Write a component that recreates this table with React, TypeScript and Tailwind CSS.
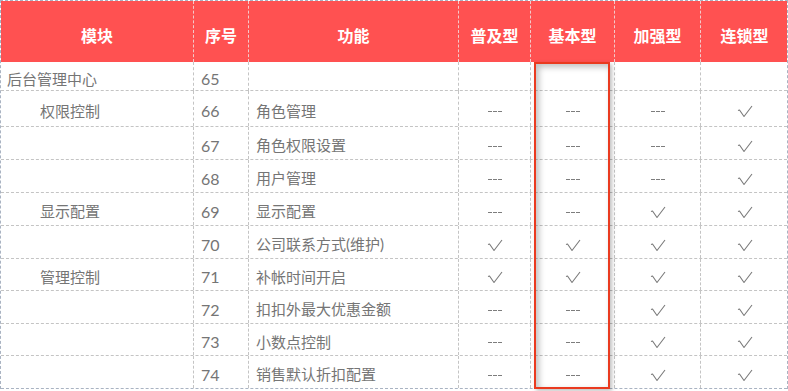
import React from 'react';

type Mark = 'y' | 'n' | '';

const cols = 'grid grid-cols-[193px_55px_210px_72px_84px_86px_87px]';

const rows: { mod: string; sub?: boolean; no: string; fn: string; h: string; marks: Mark[] }[] = [
  { mod: '后台管理中心', no: '65', fn: '', h: 'h-[29px]', marks: ['', '', '', ''] },
  { mod: '权限控制', sub: true, no: '66', fn: '角色管理', h: 'h-[36px]', marks: ['n', 'n', 'n', 'y'] },
  { mod: '', no: '67', fn: '角色权限设置', h: 'h-[33px]', marks: ['n', 'n', 'n', 'y'] },
  { mod: '', no: '68', fn: '用户管理', h: 'h-[33px]', marks: ['n', 'n', 'n', 'y'] },
  { mod: '显示配置', sub: true, no: '69', fn: '显示配置', h: 'h-[33px]', marks: ['n', 'n', 'y', 'y'] },
  { mod: '', no: '70', fn: '公司联系方式(维护)', h: 'h-[33px]', marks: ['y', 'y', 'y', 'y'] },
  { mod: '管理控制', sub: true, no: '71', fn: '补帐时间开启', h: 'h-[32px]', marks: ['y', 'y', 'y', 'y'] },
  { mod: '', no: '72', fn: '扣扣外最大优惠金额', h: 'h-[33px]', marks: ['n', 'n', 'y', 'y'] },
  { mod: '', no: '73', fn: '小数点控制', h: 'h-[32px]', marks: ['n', 'n', 'y', 'y'] },
  { mod: '', no: '74', fn: '销售默认折扣配置', h: 'h-[33px]', marks: ['n', 'n', 'y', 'y'] },
];

const headers = ['模块', '序号', '功能', '普及型', '基本型', '加强型', '连锁型'];

function Check() {
  return (
    <svg width="16" height="13" viewBox="0 0 16 13" fill="none">
      <path d="M1 5.5 L2.5 5 L7 11.5 L15 1" stroke="#7a7a7a" strokeWidth="1.1" strokeLinejoin="round" />
    </svg>
  );
}

function Dash() {
  return (
    <div className="flex gap-[1px]">
      <span className="w-[4px] h-px bg-[#7d7d7d]" />
      <span className="w-[4px] h-px bg-[#7d7d7d]" />
      <span className="w-[4px] h-px bg-[#7d7d7d]" />
    </div>
  );
}

export default function App() {
  return (
    <div
      className="relative w-[788px] h-[391px] bg-white overflow-hidden text-[15px] text-[#757575]"
      style={{ fontFamily: 'Lato, "Noto Sans CJK SC", sans-serif' }}
    >
      <div className="border-t border-l border-r border-dashed border-[#a9b3c2] w-[788px]">
        {/* header */}
        <div className={`${cols} h-[61px] bg-[#ff5151] text-white text-[16px] font-bold`}>
          {headers.map((h, i) => (
            <div
              key={h}
              className={`flex items-center justify-center pt-[9px] ${i < 6 ? 'border-r border-dashed border-[#f3c9c9]' : ''}`}
            >
              {h}
            </div>
          ))}
        </div>

        {/* body */}
        {rows.map((r, idx) => (
          <div key={r.no} className={`${cols} ${r.h} ${idx === rows.length - 1 ? 'border-b border-dashed border-[#a9b3c2]' : 'border-b border-dashed border-[#c4c4c4]'}`}>
            <div className={`flex items-center pt-[5px] border-r border-dashed border-[#c4c4c4] ${r.sub ? 'pl-[39px]' : 'pl-[6px]'}`}>
              {r.mod}
            </div>
            <div className="flex items-center pt-[5px] pl-[7px] text-[16px] border-r border-dashed border-[#c4c4c4]">{r.no}</div>
            <div className="flex items-center pt-[5px] pl-[7px] border-r border-dashed border-[#c4c4c4]">{r.fn}</div>
            {r.marks.map((m, i) => (
              <div
                key={i}
                className={`flex items-center justify-center pt-[6px] ${i < 3 ? 'border-r border-dashed border-[#c4c4c4]' : ''}`}
              >
                {m === 'y' && <Check />}
                {m === 'n' && <Dash />}
              </div>
            ))}
          </div>
        ))}
      </div>

      {/* highlight box over 基本型 column */}
      <div className="absolute left-[534px] top-[62px] w-[76px] h-[327px] border-2 border-[#ea3a1f] shadow-[inset_3px_3px_6px_rgba(0,0,0,0.25),2px_2px_4px_rgba(0,0,0,0.25)]" />
    </div>
  );
}
